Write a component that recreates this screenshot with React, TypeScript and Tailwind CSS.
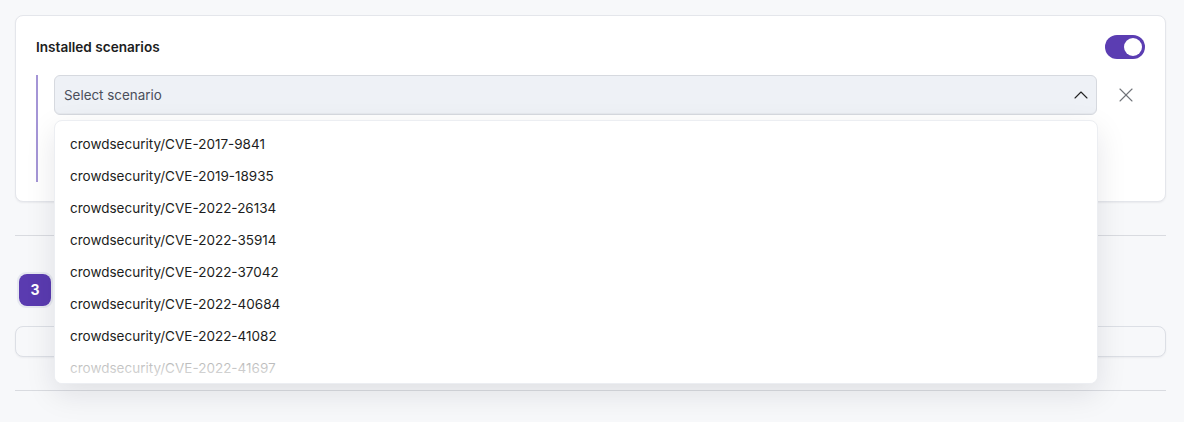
import { ChevronUp, X } from "lucide-react";

const scenarios = [
  "crowdsecurity/CVE-2017-9841",
  "crowdsecurity/CVE-2019-18935",
  "crowdsecurity/CVE-2022-26134",
  "crowdsecurity/CVE-2022-35914",
  "crowdsecurity/CVE-2022-37042",
  "crowdsecurity/CVE-2022-40684",
  "crowdsecurity/CVE-2022-41082",
  "crowdsecurity/CVE-2022-41697",
];

export default function App() {
  return (
    <div
      className="min-h-[422px] bg-[#f7f8fa] pl-[15px] pr-[18px] pt-[15px] text-[#1c1d21]"
      style={{ fontFamily: "Inter, 'Noto Sans', sans-serif" }}
    >
      {/* scenarios card */}
      <div className="rounded-lg border border-[#e4e6eb] bg-white px-5 pt-[19px] pb-[19px] shadow-[0_1px_2px_rgba(16,24,40,0.06)]">
        <div className="flex h-6 items-center justify-between">
          <h3 className="text-[13.6px] font-semibold">Installed scenarios</h3>
          <button className="flex h-6 w-10 items-center justify-end rounded-full bg-[#5b3db2] px-[3px]">
            <span className="h-[18px] w-[18px] rounded-full bg-white" />
          </button>
        </div>

        <div className="mt-4 flex min-h-[107px] border-l-2 border-[#a495d6] pl-4">
          <div className="relative flex-1">
            <div className="flex h-10 items-center justify-between rounded-md border border-[#d6d9df] bg-[#eef1f6] pl-[9px] pr-[3px] shadow-[inset_0_-1px_0_rgba(0,0,0,0.03)]">
              <span className="text-[13.4px] text-[#4a4e5a]">Select scenario</span>
              <ChevronUp className="h-6 w-6 text-[#222]" strokeWidth={1.1} />
            </div>

            {/* open menu */}
            <div className="absolute left-0 right-[-1px] top-[45px] z-10 h-[264px] overflow-hidden rounded-lg border border-[#eceef2] bg-white pt-[7px] shadow-[0_10px_30px_rgba(16,24,40,0.10)]">
              {scenarios.map((s) => (
                <div key={s} className="flex h-8 items-center px-[15px] text-[13.5px] text-[#1c1d21]">
                  {s}
                </div>
              ))}
              <div className="pointer-events-none absolute inset-x-0 bottom-0 h-[30px] bg-gradient-to-b from-white/60 to-white/90" />
            </div>
          </div>
          <div className="ml-[17px] mr-[7px] flex h-10 items-center">
            <X className="h-6 w-6 text-[#707379]" strokeWidth={1.1} />
          </div>
        </div>
      </div>

      <div className="mt-[33px] border-t border-[#d9dbe0]" />

      <div className="mt-[36px] ml-[2px] inline-flex rounded-[9px] border-2 border-[#e6e8f0] p-0">
        <div className="flex h-[32px] w-[32px] items-center justify-center rounded-lg bg-[#5a3bb0] text-sm font-bold text-white">
          3
        </div>
      </div>

      <div className="mt-[18px] h-[31px] rounded-lg border border-[#dcdfe5] bg-[#f7f8fa] shadow-[0_1px_2px_rgba(16,24,40,0.05)]" />

      <div className="mt-[33px] border-t border-[#d9dbe0]" />
    </div>
  );
}
